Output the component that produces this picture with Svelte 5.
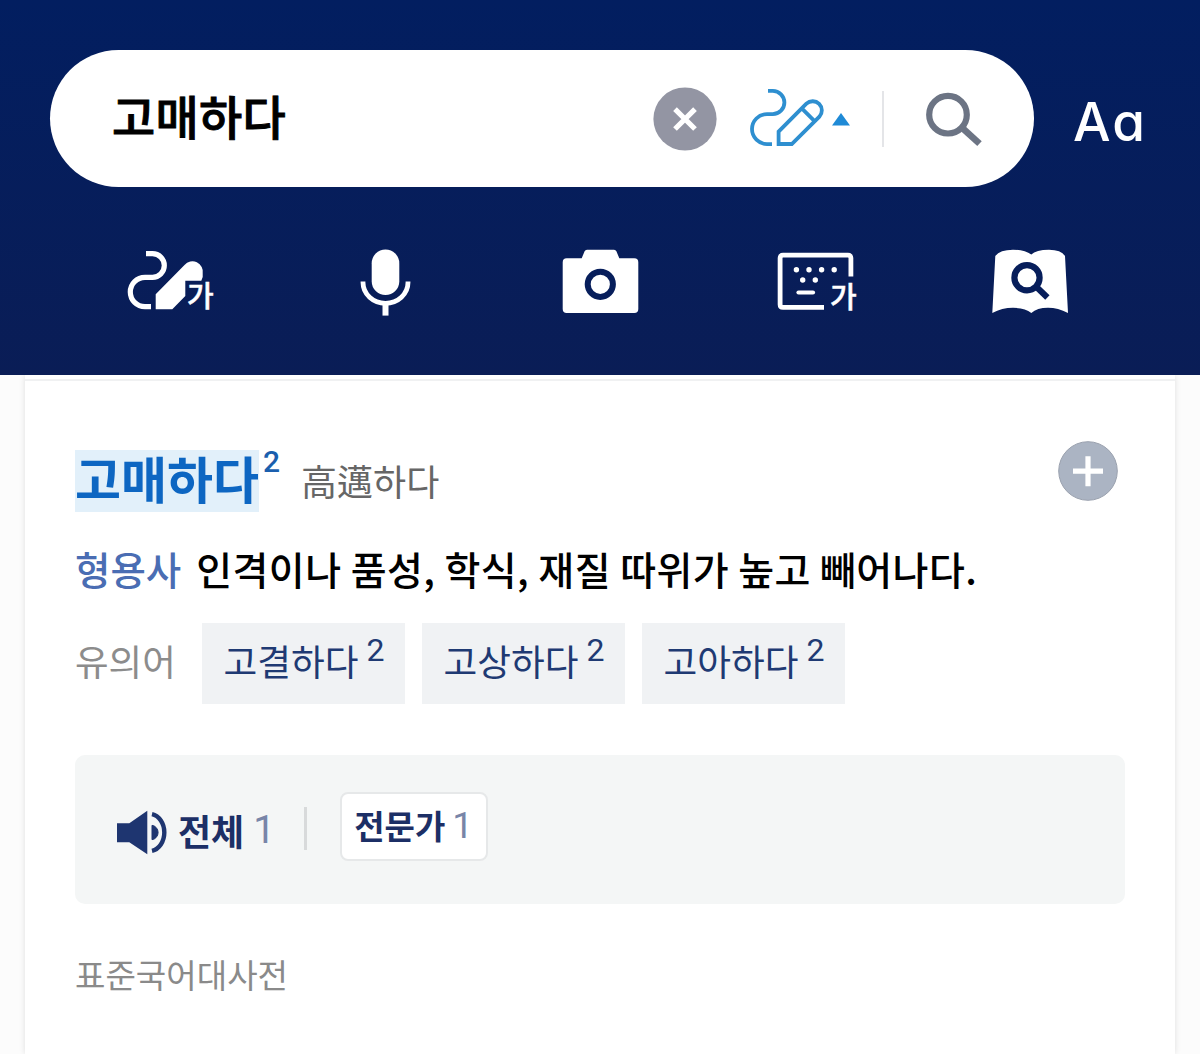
<script>
    let query = '고매하다';

    const synonyms = ['고결하다', '고상하다', '고아하다'];
</script>

<header>
    <div class="search-row">
        <div class="search-box">
            <span class="query">{query}</span>
            <svg class="clear" viewBox="0 0 64 64">
                <circle cx="32" cy="32" r="31.6" fill="#9395a3" />
                <path d="M22 22.2L42 42M42 22.2L22 42" stroke="#fff" stroke-width="5.2" />
            </svg>
            <svg class="draw" viewBox="0 0 80 60">
                <g fill="none" stroke="#2e8fd0" stroke-width="3.8">
                    <path d="M20 1.9h4.8a11.6 11.6 0 0 1 0 23.2H19a15 15 0 0 0 0 30h5" />
                    <path d="M30.6 55V42.6L58.4 14.7A9.2 9.2 0 0 1 71.4 27.7L43.8 55zM53.8 19.4L66.8 32.4" />
                </g>
            </svg>
            <svg class="arrow" viewBox="0 0 18 13"><path d="M0 12.4L9 0L18 12.4z" fill="#1f8ad6" /></svg>
            <i class="divider"></i>
            <svg class="find" viewBox="0 0 60 60">
                <g fill="none" stroke="#6c7484" stroke-width="6.2">
                    <circle cx="24" cy="24.7" r="18.8" />
                    <path d="M37.5 37.2L55.5 53.6" stroke-width="6.6" />
                </g>
            </svg>
        </div>
        <span class="font-size">Aa</span>
    </div>

    <nav>
        <svg viewBox="0 0 90 70">
            <path d="M21 6.7h6.5a11.7 11.7 0 0 1 0 23.6H20a14.7 14.7 0 0 0 0 29.4h6" fill="none" stroke="#fff" stroke-width="5.2" />
            <path d="M30.7 47.3L59.5 18A10.4 10.4 0 0 1 77.7 26.5V30L76.3 33.7H60.3V49L47.3 62.3H30.7z" fill="#fff" />
            <text x="62" y="59.8" font-size="29">가</text>
        </svg>
        <svg viewBox="0 0 90 70">
            <rect x="31.7" y="2.5" width="27.6" height="45.6" rx="13.8" fill="#fff" />
            <path d="M23 34.6v1a22.5 20.7 0 0 0 45 0v-1" fill="none" stroke="#fff" stroke-width="4.8" />
            <path d="M45.5 57V68.6" stroke="#fff" stroke-width="6" />
        </svg>
        <svg viewBox="0 0 90 70">
            <path d="M11.7 11.3H26.7L29.6 4.2Q30.3 2.7 32 2.7H59Q60.7 2.7 61.4 4.2L64.3 11.3H79.3Q83.3 11.3 83.3 15.3V62Q83.3 66 79.3 66H11.7Q7.7 66 7.7 62V15.3Q7.7 11.3 11.7 11.3z" fill="#fff" />
            <circle cx="45.3" cy="37.3" r="12.6" fill="none" stroke="#071e5b" stroke-width="6" />
        </svg>
        <svg viewBox="0 0 90 70">
            <path d="M80.9 29.6V11Q80.9 8.1 78 8.1H13Q10.1 8.1 10.1 11V57.4Q10.1 60.3 13 60.3H54" fill="none" stroke="#fff" stroke-width="4.8" />
            <path d="M26.4 22.7h.01M39 22.7h.01M51.6 22.7h.01M64.2 22.7h.01M32.7 33h.01M45.3 33h.01" stroke="#fff" stroke-width="5.4" stroke-linecap="round" />
            <path d="M28.5 45.5H43" stroke="#fff" stroke-width="4.2" stroke-linecap="round" />
            <text x="60" y="61" font-size="29">가</text>
        </svg>
        <svg viewBox="0 0 90 70">
            <path d="M10.3 9Q15 2.7 28 2.7Q40 2.7 46.3 7.6Q51 2.7 64 2.7Q76 2.7 80 9L83 66Q73 60.8 63 60.8Q52 60.8 46.3 66Q40 60.8 28 60.8Q17 60.8 7.3 66z" fill="#fff" />
            <g fill="none" stroke="#071e5b" stroke-width="6.2">
                <circle cx="42" cy="30.7" r="12.6" />
                <path d="M51 39.5L62.4 50.4" />
            </g>
        </svg>
    </nav>
</header>

<main>
    <article>
        <div class="title-row">
            <h1>{query}</h1>
            <sup class="number">2</sup>
            <span class="hanja">高邁하다</span>
            <svg class="add" viewBox="0 0 60 60">
                <circle cx="30" cy="30" r="29.3" fill="#abb4c3" stroke="#9aa1ae" />
                <path d="M15 30.2H45M30 15.2V45.2" stroke="#fff" stroke-width="5.2" />
            </svg>
        </div>

        <p class="meaning"><span class="pos">형용사</span><span class="text">인격이나 품성, 학식, 재질 따위가 높고 빼어나다.</span></p>

        <div class="synonyms">
            <span class="label">유의어</span>
            {#each synonyms as word}
                <span class="chip">{word}<sup>2</sup></span>
            {/each}
        </div>

        <div class="listen">
            <svg viewBox="0 0 54 48">
                <path d="M2 15.3H14.3L32.3 2.7V46.3L14.3 34.3H2z" fill="#1e3570" />
                <path d="M37 17.3A7.3 7.3 0 0 1 37 31.7z" fill="#1e3570" stroke="#1e3570" />
                <path d="M37 6.2A15 18.6 0 0 1 37 42.8" fill="none" stroke="#1e3570" stroke-width="4.4" />
            </svg>
            <span class="all">전체</span>
            <span class="count">1</span>
            <i class="bar"></i>
            <span class="badge"><b>전문가</b><span class="count">1</span></span>
        </div>

        <p class="source">표준국어대사전</p>
    </article>
</main>

<style>
    :global(body) {
        margin: 0;
        background: #fcfcfc;
        font-family: "Noto Sans CJK KR", sans-serif;
    }

    svg {
        display: block;
        flex: none;
    }

    header {
        position: relative;
        height: 375px;
        padding-top: 50px;
        box-sizing: border-box;
        background: linear-gradient(#021e60, #0a1d56);
    }

    .search-row {
        display: flex;
        align-items: center;
        padding-left: 50px;
    }

    .search-box {
        display: flex;
        align-items: center;
        width: 984px;
        height: 137px;
        padding: 0 50px 0 62px;
        box-sizing: border-box;
        border-radius: 69px;
        background: #fff;
    }

    .query {
        flex: 1;
        font-size: 47px;
        font-weight: 500;
        line-height: 60px;
        letter-spacing: 0.3px;
        margin-top: -7px;
        color: #000;
        -webkit-text-stroke: 0.9px #000;
    }

    .clear {
        width: 64px;
        height: 64px;
    }

    .draw {
        width: 80px;
        height: 60px;
        margin: 1px 0 0 31px;
    }

    .arrow {
        width: 18px;
        height: 13px;
        margin: 2px 0 0 4px;
    }

    .divider {
        width: 2px;
        height: 56px;
        margin-left: 32px;
        background: #e4e5e8;
    }

    .find {
        width: 60px;
        height: 60px;
        margin: 2px 0 0 40px;
    }

    .font-size {
        margin: 6px 0 0 39px;
        font-family: Inter, sans-serif;
        font-feature-settings: "cv11";
        font-size: 53px;
        font-weight: 500;
        line-height: 60px;
        letter-spacing: 2px;
        color: #fff;
    }

    nav {
        display: grid;
        grid-template-columns: repeat(5, 215px);
        justify-content: center;
        justify-items: center;
        margin-top: 60px;
    }

    nav svg {
        width: 90px;
        height: 70px;
    }

    nav text {
        fill: #fff;
        stroke: #fff;
        stroke-width: 0.5px;
        font-weight: 500;
    }

    main {
        padding: 0 25px;
    }

    article {
        height: 679px;
        padding: 5px 50px 0;
        box-sizing: border-box;
        background: linear-gradient(#fff 4px, #f0f1f2 4px, #f0f1f2 6px, #fff 6px);
        box-shadow: 0 0 6px rgba(0, 0, 0, 0.12);
        overflow: hidden;
    }

    .title-row {
        display: flex;
        height: 62px;
        margin-top: 70px;
    }

    h1 {
        height: 62px;
        margin: 0;
        font-size: 50px;
        font-weight: 700;
        line-height: 54px;
        color: #0d66c2;
        background: #e2f0fa;
    }

    .number {
        margin-left: 4px;
        font-family: Roboto, sans-serif;
        font-size: 30px;
        font-weight: 500;
        line-height: 24px;
        color: #1b5fae;
    }

    .hanja {
        flex: 1;
        margin-left: 21px;
        font-size: 36px;
        line-height: 60px;
        color: #666;
    }

    .add {
        width: 60px;
        height: 60px;
        margin: -9px 7.5px 0 0;
    }

    p {
        margin: 0;
        white-space: nowrap;
    }

    .meaning {
        margin-top: 28px;
        font-size: 38.5px;
        font-weight: 500;
        line-height: 56px;
        color: #000;
    }

    .pos {
        margin-right: 15px;
        color: #4a6db3;
    }

    .text {
        font-size: 39px;
        letter-spacing: 0.42px;
    }

    .synonyms {
        display: flex;
        gap: 16.5px;
        margin-top: 27px;
    }

    .label {
        width: 110px;
        font-size: 36.5px;
        line-height: 75px;
        color: #8c8c8c;
    }

    .chip {
        width: 203.5px;
        height: 81px;
        padding-left: 22px;
        box-sizing: border-box;
        font-size: 36.7px;
        line-height: 74px;
        color: #1f3a73;
        background: #f0f2f4;
    }

    .chip sup {
        display: inline-block;
        margin-left: 8px;
        font-family: Roboto, sans-serif;
        font-size: 32px;
        line-height: 1;
        vertical-align: 15px;
    }

    .listen {
        display: flex;
        align-items: center;
        height: 149px;
        margin-top: 51px;
        padding-left: 40px;
        border-radius: 10px;
        background: #f4f6f6;
    }

    .listen > svg {
        width: 54px;
        height: 48px;
        margin-top: 5px;
    }

    .all {
        margin-left: 9px;
        font-size: 36px;
        font-weight: 700;
        color: #1c2f66;
    }

    .count {
        width: 20px;
        margin-left: 9px;
        font-family: Roboto, sans-serif;
        font-size: 39px;
        color: #7885a8;
    }

    .bar {
        width: 3px;
        height: 43px;
        margin: -2px 0 0 31px;
        background: #d8dadb;
    }

    .badge {
        display: flex;
        width: 148px;
        height: 69px;
        margin: -6px 0 0 33px;
        padding-left: 12px;
        box-sizing: border-box;
        border: 2px solid #e6e8e9;
        border-radius: 8px;
        background: #fff;
        font-size: 33px;
        line-height: 63px;
    }

    .badge b {
        color: #1c2f66;
    }

    .badge .count {
        margin-left: 7px;
        font-size: 37px;
    }

    .source {
        margin-top: 45px;
        font-size: 33.1px;
        line-height: 50px;
        color: #8a8a8a;
    }
</style>
